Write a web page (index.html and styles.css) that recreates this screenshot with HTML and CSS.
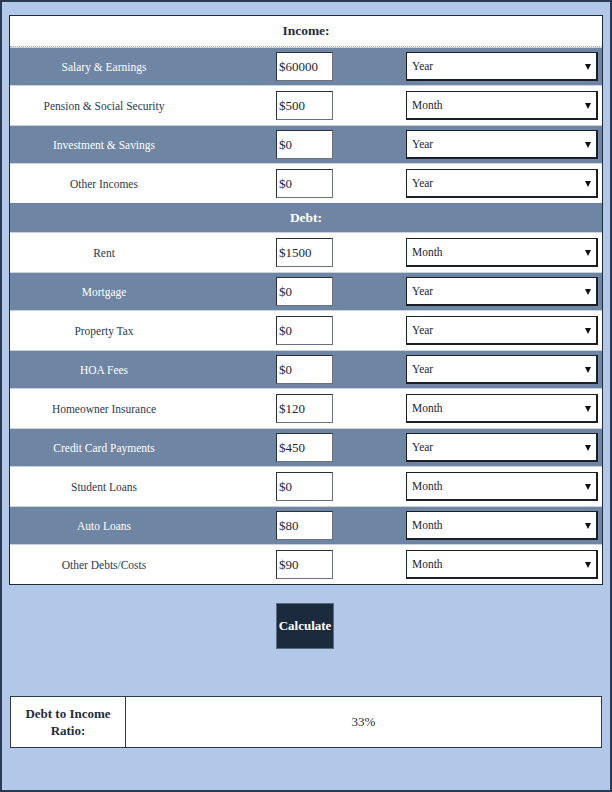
FILE: index.html
```html
<!DOCTYPE html>
<html>
<head>
<meta charset="utf-8">
<link rel="stylesheet" href="styles.css">
</head>
<body>
<div class="frame">
  <div class="calc">
    <div class="head head-light">Income:</div>
    <div class="row dark"><span class="label">Salary &amp; Earnings</span><input class="amt" value="$60000"><span class="sel"><span class="opt">Year</span></span></div>
    <div class="row"><span class="label">Pension &amp; Social Security</span><input class="amt" value="$500"><span class="sel"><span class="opt">Month</span></span></div>
    <div class="row dark"><span class="label">Investment &amp; Savings</span><input class="amt" value="$0"><span class="sel"><span class="opt">Year</span></span></div>
    <div class="row"><span class="label">Other Incomes</span><input class="amt" value="$0"><span class="sel"><span class="opt">Year</span></span></div>
    <div class="head head-dark">Debt:</div>
    <div class="row"><span class="label">Rent</span><input class="amt" value="$1500"><span class="sel"><span class="opt">Month</span></span></div>
    <div class="row dark"><span class="label">Mortgage</span><input class="amt" value="$0"><span class="sel"><span class="opt">Year</span></span></div>
    <div class="row"><span class="label">Property Tax</span><input class="amt" value="$0"><span class="sel"><span class="opt">Year</span></span></div>
    <div class="row dark"><span class="label">HOA Fees</span><input class="amt" value="$0"><span class="sel"><span class="opt">Year</span></span></div>
    <div class="row"><span class="label">Homeowner Insurance</span><input class="amt" value="$120"><span class="sel"><span class="opt">Month</span></span></div>
    <div class="row dark"><span class="label">Credit Card Payments</span><input class="amt" value="$450"><span class="sel"><span class="opt">Year</span></span></div>
    <div class="row"><span class="label">Student Loans</span><input class="amt" value="$0"><span class="sel"><span class="opt">Month</span></span></div>
    <div class="row dark"><span class="label">Auto Loans</span><input class="amt" value="$80"><span class="sel"><span class="opt">Month</span></span></div>
    <div class="row"><span class="label">Other Debts/Costs</span><input class="amt" value="$90"><span class="sel"><span class="opt">Month</span></span></div>
  </div>
  <div class="btn-wrap"><button class="btn">Calculate</button></div>
  <div class="result">
    <div class="res-label">Debt to Income Ratio:</div>
    <div class="res-value">33%</div>
  </div>
</div>
</body>
</html>
```

FILE: styles.css
```css
* { box-sizing: border-box; }
html, body { margin: 0; padding: 0; }
body {
  font-family: "Liberation Serif", "DejaVu Serif", serif;
  color: #2b3a50;
}
.frame {
  width: 612px;
  height: 792px;
  background: #b3c8e8;
  border: 2px solid #2a3a55;
  padding: 13px 7px 0 7px;
}
.calc {
  border: 1px solid #1e2c40;
  background: #fff;
}
.head {
  height: 31px;
  display: flex;
  align-items: center;
  justify-content: center;
  font-weight: bold;
  font-size: 13.5px;
}
.head-light { background: #fff; color: #1f2d42; border-bottom: 1px dotted #9aa6b6; }
.head-dark { background: #6e85a4; color: #fff; height: 30px; border-bottom: 1px solid #c9d3e0; }
.row {
  height: 39px;
  display: grid;
  grid-template-columns: 188px 208px 1fr;
  align-items: center;
  font-size: 13.5px;
  background: #fff;
  color: #2b3a50;
}
.row.dark {
  background: #6e85a4;
  color: #fff;
  border-top: 1px solid #c9d3e0;
  border-bottom: 1px solid #c9d3e0;
}
.label {
  text-align: center;
  transform: scaleX(0.85);
}
.amt {
  margin-left: 78px;
  width: 57px;
  height: 29px;
  border: 1px solid #2a2f38;
  border-right-color: #6a7080;
  border-bottom-color: #6a7080;
  background: #fff;
  font-family: inherit;
  font-size: 13px;
  color: #1c2433;
  padding: 0 2px;
  outline: none;
}
.sel {
  position: relative;
  width: 192px;
  height: 29px;
  border: 1px solid #1a1f28;
  border-right-width: 2px;
  border-bottom-width: 2px;
  background: #fff;
  color: #1c2433;
  display: flex;
  align-items: center;
  padding-left: 5px;
  font-size: 13.5px;
}
.opt {
  display: inline-block;
  transform: scaleX(0.85);
  transform-origin: left center;
}
.sel::after {
  content: "";
  position: absolute;
  right: 5px;
  top: 11px;
  border-left: 3px solid transparent;
  border-right: 3px solid transparent;
  border-top: 6px solid #111;
}
.btn-wrap {
  display: flex;
  justify-content: center;
  padding-top: 18px;
  height: 111px;
}
.btn {
  margin-right: 2px;
  width: 58px;
  height: 46px;
  background: #1c2a3e;
  color: #fff;
  border: 1px solid #5a6a80;
  font-family: inherit;
  font-weight: bold;
  font-size: 13px;
  padding: 0;
}
.result {
  margin: 0 1px;
  height: 52px;
  display: grid;
  grid-template-columns: 115px 1fr;
  background: #fff;
  border: 1px solid #2a3a50;
}
.res-label {
  border-right: 1px solid #2a3a50;
  display: flex;
  align-items: center;
  justify-content: center;
  text-align: center;
  font-weight: bold;
  font-size: 13px;
  line-height: 17px;
  padding: 0 12px;
  color: #1f2d42;
}
.res-value {
  display: flex;
  align-items: center;
  justify-content: center;
  font-size: 13px;
  color: #1f2d42;
}
```
